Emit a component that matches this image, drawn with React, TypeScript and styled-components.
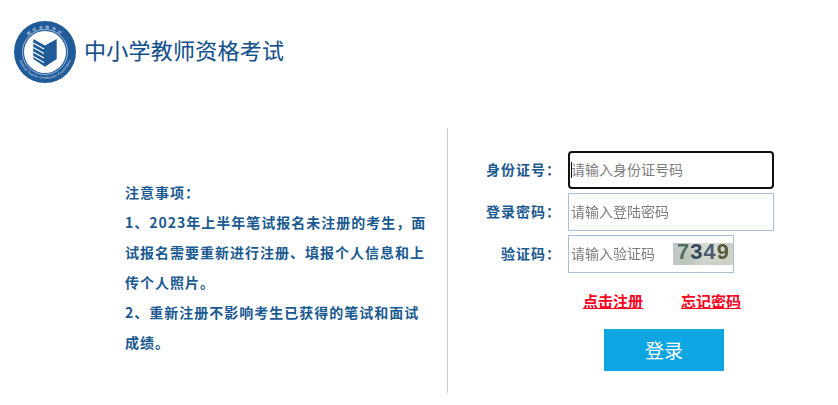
import React from "react";
import styled, { createGlobalStyle } from "styled-components";

const Global = createGlobalStyle`
  html, body { margin: 0; padding: 0; background: #fff; }
  body { font-family: "Liberation Serif", "Noto Sans CJK SC", serif; }
`;
const Page = styled.div`
  width: 838px;
  height: 405px;
  overflow: hidden;
  display: flex;
  flex-direction: column;
`;
const Header = styled.header`
  height: 128px;
  padding: 21px 0 0 14px;
  box-sizing: border-box;
  display: flex;
  align-items: flex-start;
  gap: 9px;
`;
const Title = styled.h1`
  margin: 13px 0 0 -1px;
  font: 400 22px/30px "Noto Sans CJK SC", sans-serif;
  color: #134f8c;
  letter-spacing: 0.25px;
  -webkit-text-stroke: 0.1px #134f8c;
`;
const Main = styled.main`
  display: flex;
  height: 265px;
`;
const Notes = styled.section`
  width: 448px;
  box-sizing: border-box;
  border-right: 1px solid #c9c9c9;
  padding: 49px 20px 0 125px;
  font: 700 14px/30px "Noto Sans CJK SC", sans-serif;
  letter-spacing: 1px;
  color: #1a5a90;
`;
const NoteLine = styled.p`
  margin: 0;
`;
const FormArea = styled.form`
  padding: 23px 0 0 0;
  display: flex;
  flex-direction: column;
`;
const Row = styled.div`
  display: flex;
  align-items: center;
  height: 38px;
  margin-bottom: 4px;
`;
const Label = styled.label`
  width: 120px;
  padding: 0 7px 2px 0;
  box-sizing: border-box;
  text-align: right;
  font: 700 14px/20px "Noto Sans CJK SC", sans-serif;
  letter-spacing: 1px;
  color: #1a5a90;
`;
const InputBox = styled.div<{ $w: number }>`
  position: relative;
  width: ${(p) => p.$w}px;
  height: 38px;
  box-sizing: border-box;
  border: 1px solid #a9bdd4;
  display: flex;
  align-items: center;
  justify-content: space-between;
  padding: 0 0 0 2px;
  &:focus-within {
    border: 2px solid #101010;
    border-radius: 4px;
    padding-left: 1px;
  }
`;
const Field = styled.input`
  border: 0;
  outline: 0;
  padding: 0 0 3px;
  box-sizing: border-box;
  margin: 0;
  flex: 1;
  min-width: 0;
  height: 100%;
  background: transparent;
  font: 400 14px "Noto Sans CJK SC", sans-serif;
  color: #333;
  caret-color: transparent;
  &::placeholder { color: #7d7d7d; opacity: 1; }
`;
const Caret = styled.span`
  position: absolute;
  left: 1px;
  top: 9px;
  width: 1px;
  height: 16px;
  background: #000;
`;
const Captcha = styled.span`
  width: 60px;
  height: 22px;
  flex: none;
  display: flex;
  align-items: center;
  justify-content: center;
  background:
    radial-gradient(circle at 20% 70%, #b9c4b4 0, transparent 40%),
    radial-gradient(circle at 65% 30%, #dfe0d6 0, transparent 35%),
    linear-gradient(90deg, #c3c8da 0%, #d3d6cf 40%, #c9cfc4 70%, #cfd2c6 100%);
  font: 700 22px/22px "Liberation Mono", monospace;
`;
const Digit = styled.span<{ $c: string }>`
  color: ${(p) => p.$c};
`;
const Links = styled.div`
  margin: 13px 0 0 135px;
  display: flex;
  gap: 38px;
`;
const LinkText = styled.a`
  font: 700 15px/22px "Noto Sans CJK SC", sans-serif;
  color: #fb0020;
  text-decoration: underline;
  cursor: pointer;
`;
const Submit = styled.button`
  margin: 17px 0 0 156px;
  width: 120px;
  height: 42px;
  border: 0;
  padding: 0 0 2px;
  background: #0ea5e3;
  color: #fff;
  font: 400 19px "Noto Sans CJK SC", sans-serif;
  cursor: pointer;
`;

const Logo = () => (
  <svg width="62" height="62" viewBox="0 0 62 62" aria-label="logo">
    <defs>
      <path id="ringTop" d="M7.8 31a23.2 23.2 0 0 1 46.4 0" />
      <path id="ringBottom" d="M4 31a27 27 0 0 0 54 0" />
    </defs>
    <circle cx="31" cy="31" r="31" fill="#1f5a99" />
    <circle cx="31" cy="31" r="22.5" fill="none" stroke="#dbe6f1" strokeWidth="0.7" />
    <circle cx="31" cy="31" r="21" fill="#fff" />
    <text fontSize="4.2" fill="#c9d8e8" letterSpacing="2" fontFamily="Noto Sans CJK SC, sans-serif">
      <textPath href="#ringTop" startOffset="50%" textAnchor="middle">教师资格考试</textPath>
    </text>
    <text fontSize="3.6" fill="#c9d8e8" fontFamily="Liberation Sans, sans-serif">
      <textPath href="#ringBottom" startOffset="50%" textAnchor="middle">National Teacher Certification Examination</textPath>
    </text>
    <path d="M19.3 18 L31 24.5 L42.7 18 V38 L31 45.7 L19.3 38 Z" fill="#1f5a99" />
    <path d="M19.3 22 L30 28 M19.3 26.5 L30 32.5 M19.3 31 L30 37 M19.3 35.5 L30 41.5" stroke="#fff" strokeWidth="1.2" fill="none" />
  </svg>
);

export default function App() {
  return (
    <Page>
      <Global />
      <Header>
        <Logo />
        <Title>中小学教师资格考试</Title>
      </Header>
      <Main>
        <Notes>
          <NoteLine>注意事项：</NoteLine>
          <NoteLine>1、2023年上半年笔试报名未注册的考生，面试报名需要重新进行注册、填报个人信息和上传个人照片。</NoteLine>
          <NoteLine>2、重新注册不影响考生已获得的笔试和面试成绩。</NoteLine>
        </Notes>
        <FormArea>
          <Row>
            <Label>身份证号：</Label>
            <InputBox $w={206}><Field autoFocus placeholder="请输入身份证号码" /><Caret /></InputBox>
          </Row>
          <Row>
            <Label>登录密码：</Label>
            <InputBox $w={206}><Field type="password" placeholder="请输入登陆密码" /></InputBox>
          </Row>
          <Row>
            <Label>验证码：</Label>
            <InputBox $w={166}>
              <Field placeholder="请输入验证码" />
              <Captcha>
                <Digit $c="#4f6f5c">7</Digit>
                <Digit $c="#33455c">3</Digit>
                <Digit $c="#4a5c74">4</Digit>
                <Digit $c="#565c40">9</Digit>
              </Captcha>
            </InputBox>
          </Row>
          <Links>
            <LinkText>点击注册</LinkText>
            <LinkText>忘记密码</LinkText>
          </Links>
          <Submit type="button">登录</Submit>
        </FormArea>
      </Main>
    </Page>
  );
}
